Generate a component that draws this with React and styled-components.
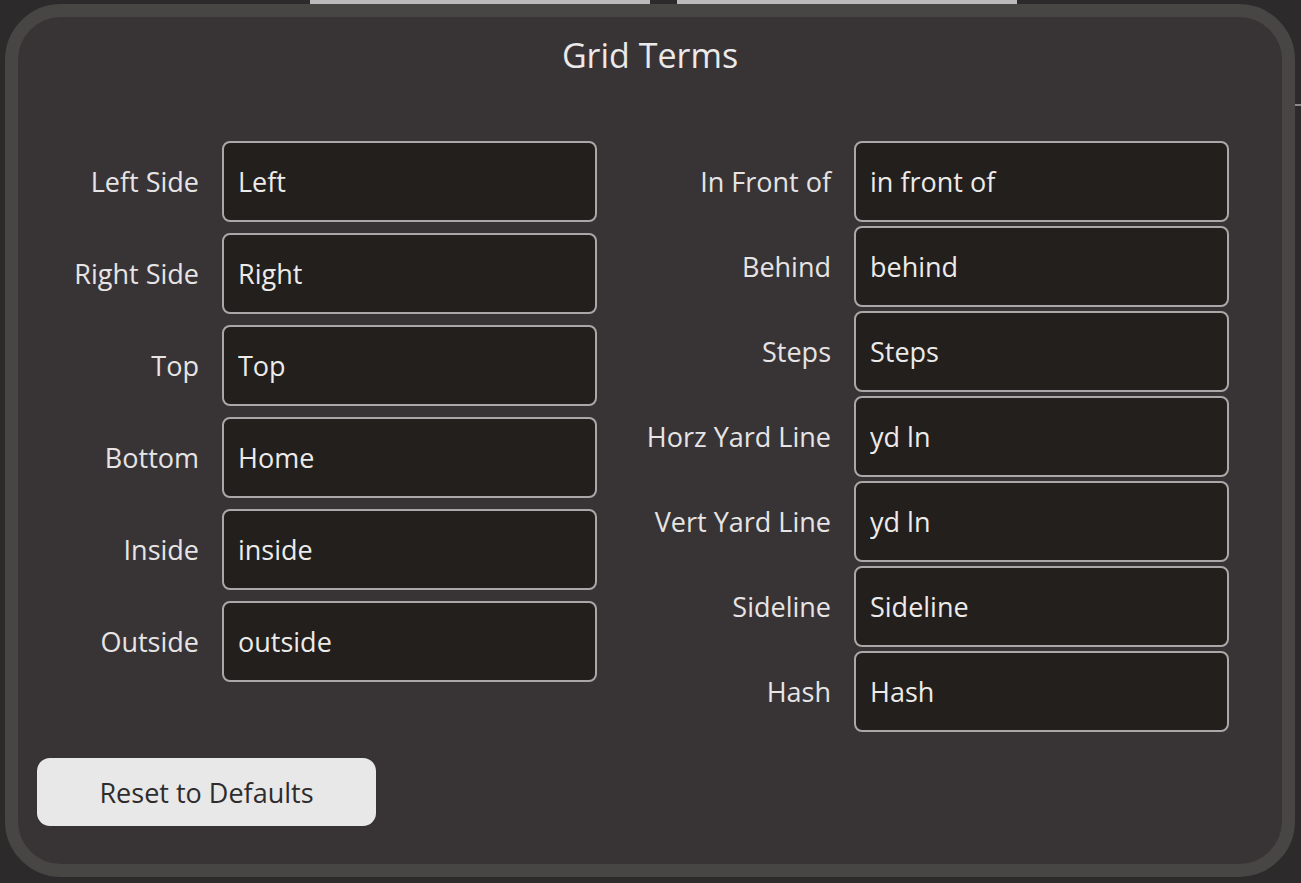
import React from "react";
import styled, { createGlobalStyle } from "styled-components";

const Global = createGlobalStyle`
  html, body { margin: 0; padding: 0; background: #2c2a2a; }
  body { width: 1301px; height: 883px; overflow: hidden; font-family: "Open Sans", "Noto Sans", sans-serif; }
  * { box-sizing: border-box; }
`;

const Backdrop = styled.div`
  position: relative;
  width: 1301px;
  height: 883px;
  background: #2c2a2a;
  overflow: hidden;
`;

const BehindTab = styled.div`
  position: absolute;
  top: 0;
  left: ${(p) => p.$left}px;
  width: 340px;
  height: 4px;
  background: #bcbaba;
`;

const BehindLine = styled.div`
  position: absolute;
  top: 104px;
  right: 0;
  width: 6px;
  height: 2px;
  background: #8a8888;
`;

const Modal = styled.div`
  position: absolute;
  left: 5px;
  top: 4px;
  width: 1290px;
  height: 873px;
  border: 13px solid #474644;
  border-radius: 56px;
  background: #383436;
  padding: 15px 19px 38px 19px;
  display: flex;
  flex-direction: column;
`;

const Title = styled.h1`
  margin: 0;
  font-size: 34px;
  line-height: 46px;
  font-weight: 400;
  color: #ebe9e9;
  text-align: center;
`;

const Columns = styled.div`
  display: flex;
  align-items: flex-start;
  margin-top: 63px;
  gap: 23px;
`;

const FieldGrid = styled.div`
  display: grid;
  grid-template-columns: ${(p) => p.$labelWidth}px 375px;
  column-gap: 23px;
  row-gap: ${(p) => p.$rowGap}px;
  align-items: center;
  align-content: start;
`;

const Label = styled.label`
  justify-self: end;
  font-size: 27px;
  color: #e6e4e4;
  white-space: nowrap;
`;

const Input = styled.input`
  height: 81px;
  width: 375px;
  border: 2px solid #a9a7a7;
  border-radius: 8px;
  background: #231f1d;
  color: #ecebea;
  font-family: "Open Sans", "Noto Sans", sans-serif;
  font-size: 27px;
  padding: 0 14px;
  outline: none;
`;

const ResetButton = styled.button`
  margin-top: auto;
  align-self: flex-start;
  width: 339px;
  height: 68px;
  border: none;
  border-radius: 13px;
  background: #e9e8e8;
  color: #2e2c2c;
  font-family: "Open Sans", "Noto Sans", sans-serif;
  font-size: 27px;
`;

const left = [
  ["Left Side", "Left"],
  ["Right Side", "Right"],
  ["Top", "Top"],
  ["Bottom", "Home"],
  ["Inside", "inside"],
  ["Outside", "outside"],
];

const right = [
  ["In Front of", "in front of"],
  ["Behind", "behind"],
  ["Steps", "Steps"],
  ["Horz Yard Line", "yd ln"],
  ["Vert Yard Line", "yd ln"],
  ["Sideline", "Sideline"],
  ["Hash", "Hash"],
];

function Fields({ items, labelWidth, rowGap }) {
  return (
    <FieldGrid $labelWidth={labelWidth} $rowGap={rowGap}>
      {items.map(([l, v]) => (
        <React.Fragment key={l}>
          <Label>{l}</Label>
          <Input defaultValue={v} />
        </React.Fragment>
      ))}
    </FieldGrid>
  );
}

export default function App() {
  return (
    <Backdrop>
      <Global />
      <BehindTab $left={310} />
      <BehindTab $left={677} />
      <BehindLine />
      <Modal>
        <Title>Grid Terms</Title>
        <Columns>
          <Fields items={left} labelWidth={162} rowGap={11} />
          <Fields items={right} labelWidth={211} rowGap={4} />
        </Columns>
        <ResetButton>Reset to Defaults</ResetButton>
      </Modal>
    </Backdrop>
  );
}
